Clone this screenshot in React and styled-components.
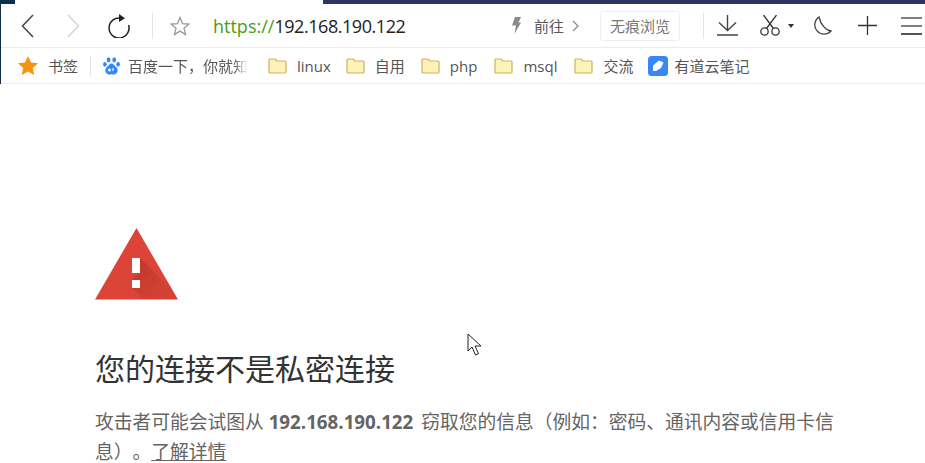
import styled, { createGlobalStyle } from "styled-components"

const GlobalStyle = createGlobalStyle`
  html, body { margin: 0; padding: 0; background: #fff; overflow: hidden; }
  body { font-family: "Noto Sans CJK SC", sans-serif; }
`

const Page = styled.div`
  position: relative;
  width: 925px;
  height: 463px;
  overflow: hidden;
`

const TopStrip = styled.div`
  display: flex;
  height: 4px;
`
const StripPart = styled.div`
  width: ${p => p.$w ? p.$w + "px" : "auto"};
  flex: ${p => p.$w ? "none" : 1};
  background: ${p => p.$color};
`

const Chrome = styled.div`
  border-left: 1px solid #12304a;
`

const Toolbar = styled.div`
  display: flex;
  align-items: center;
  height: 43px;
  padding-right: 3px;
  border-bottom: 1px solid #ececec;
`

const IconSlot = styled.span`
  display: flex;
  flex: none;
  margin-left: ${p => p.$ml}px;
`

const Divider = styled.span`
  flex: none;
  width: 1px;
  height: ${p => p.$h}px;
  background: #e4e4e4;
  margin-left: ${p => p.$ml}px;
`

const Url = styled.div`
  flex: 1;
  margin-left: 23px;
  font-family: "Open Sans", sans-serif;
  font-size: 18px;
  letter-spacing: -0.45px;
  color: #222;
  white-space: nowrap;
`
const Scheme = styled.span`
  color: #4a9d12;
  letter-spacing: 0;
`

const GoLabel = styled.span`
  margin-left: 13px;
  font-size: 15px;
  color: #5a5a5a;
  white-space: nowrap;
`

const PrivateButton = styled.div`
  flex: none;
  box-sizing: border-box;
  width: 80px;
  height: 30px;
  margin-left: 21px;
  border: 1px solid #eee;
  border-radius: 3px;
  display: flex;
  align-items: center;
  justify-content: center;
  font-size: 15px;
  color: #777;
`

const BookmarkBar = styled.div`
  display: flex;
  align-items: center;
  height: 35px;
  border-bottom: 1px solid #ececec;
  font-size: 15px;
  color: #555;
`

const Bookmark = styled.span`
  flex: none;
  display: flex;
  align-items: center;
  gap: ${p => p.$gap || 10}px;
  margin-left: ${p => p.$ml}px;
  white-space: nowrap;
  font-family: "Open Sans", "Noto Sans CJK SC", sans-serif;
`

const FadeLabel = styled.span`
  width: 120px;
  overflow: hidden;
  -webkit-mask-image: linear-gradient(to right, #000 88%, transparent);
  mask-image: linear-gradient(to right, #000 88%, transparent);
`

const Content = styled.main`
  padding: 144px 0 0 95px;
  width: 750px;
`

const Heading = styled.h1`
  margin: 41px 0 0;
  font-size: 30px;
  font-weight: 400;
  line-height: 52px;
  color: #333;
`

const Message = styled.p`
  margin: 14px 0 0;
  font-family: "Open Sans", "Noto Sans CJK SC", sans-serif;
  font-size: 18.75px;
  line-height: 30px;
  color: #646464;
  text-spacing-trim: space-all;
  strong { font-weight: 700; margin-right: 3px; }
  a { color: #646464; text-decoration: underline; }
`

const Cursor = styled.svg`
  position: absolute;
  left: 467px;
  top: 333px;
`

const Back = ({ color = "#444", flip }) => (
  <svg width="13" height="24" viewBox="0 0 13 24" fill="none" stroke={color} strokeWidth="1.5"
    style={flip ? { transform: "scaleX(-1)" } : undefined}>
    <path d="M12 1 1.5 12 12 23" />
  </svg>
)

const Reload = () => (
  <svg width="22" height="24" viewBox="0 0 22 24" fill="none">
    <path d="M13 4.2A10 10 0 1 0 20.6 11" stroke="#222" strokeWidth="1.5" />
    <path d="M11 0 17 4.2 11 8z" fill="#222" />
  </svg>
)

const StarOutline = () => (
  <svg width="20" height="20" viewBox="0 0 20 20" fill="none" stroke="#999" strokeWidth="1.3">
    <path d="M10 1.5 12.5 7.7 19 8.1 14 12.3 15.6 18.6 10 15.1 4.4 18.6 6 12.3 1 8.1 7.5 7.7z" />
  </svg>
)

const Bolt = () => (
  <svg width="9" height="17" viewBox="0 0 9 17" fill="#8a8a8a">
    <path d="M3 0h6L6.5 5.5H9L2.5 17 4 8.5H0z" />
  </svg>
)

const SmallChevron = () => (
  <svg width="7" height="12" viewBox="0 0 7 12" fill="none" stroke="#888" strokeWidth="1.2">
    <path d="M1 1 6 6 1 11" />
  </svg>
)

const Download = () => (
  <svg width="21" height="21" viewBox="0 0 21 21" fill="none" stroke="#444" strokeWidth="1.4">
    <path d="M10.5 0v15M2 7.5l8.5 8 8.5-8M0 20h21" />
  </svg>
)

const Scissors = () => (
  <svg width="20" height="21" viewBox="0 0 20 21" fill="none" stroke="#333" strokeWidth="1.3">
    <circle cx="4.5" cy="16.5" r="3.7" />
    <circle cx="15.5" cy="16.5" r="3.7" />
    <path d="M6.5 13.5 16.5 0M13.5 13.5 3.5 0" />
  </svg>
)

const Caret = () => (
  <svg width="6" height="4" viewBox="0 0 6 4" fill="#333"><path d="M0 0h6L3 4z" /></svg>
)

const Moon = () => (
  <svg width="20" height="20" viewBox="0 0 20 20" fill="none" stroke="#444" strokeWidth="1.3">
    <path d="M7 1A9.300 9.300 0 1 0 19 15C14 14.500 8.500 8.500 7 1z" />
  </svg>
)

const Plus = () => (
  <svg width="19" height="19" viewBox="0 0 19 19" stroke="#333" strokeWidth="1.3">
    <path d="M9.5 0v19M0 9.5h19" />
  </svg>
)

const Menu = () => (
  <svg width="21" height="18" viewBox="0 0 21 18" stroke="#555" strokeWidth="1.4">
    <path d="M0 1h21M0 9h21" />
    <path d="M0 17h21" strokeWidth="2" />
  </svg>
)

const StarFilled = () => (
  <svg width="20" height="19" viewBox="0 0 20 19" fill="#f7940f">
    <path d="M10 0 13 6.4 20 7.2 14.8 12 16.2 19 10 15.5 3.8 19 5.2 12 0 7.2 7 6.4z" />
  </svg>
)

const Paw = () => (
  <svg width="17" height="18" viewBox="0 0 17 18" fill="#3385ff">
    <ellipse cx="5.6" cy="2.8" rx="1.9" ry="2.6" />
    <ellipse cx="11.2" cy="2.8" rx="1.9" ry="2.6" />
    <ellipse cx="1.9" cy="7.3" rx="1.8" ry="2.4" />
    <ellipse cx="15.1" cy="7.3" rx="1.8" ry="2.4" />
    <path d="M8.5 6.5c2 0 2.6 2 4.6 3.6 2.6 2 2 6.900-2 7.400-1 .1-1.800-.3-2.600-.3s-1.600.4-2.600.3c-4-.5-4.600-5.400-2-7.400C5.900 8.500 6.500 6.500 8.500 6.500z" />
    <circle cx="6.500" cy="13" r="1.500" fill="#fff" />
    <path d="M10 11v3" stroke="#fff" strokeWidth="1.200" />
  </svg>
)

const Folder = () => (
  <svg width="19" height="16" viewBox="0 0 19 16" fill="#fdf3b8" stroke="#d6ad5f" strokeWidth="1.200">
    <path d="M1 14V2a1 1 0 0 1 1-1h5l2 2h8a1 1 0 0 1 1 1v10a1 1 0 0 1-1 1H2a1 1 0 0 1-1-1z" />
  </svg>
)

const NoteLogo = () => (
  <svg width="20" height="20" viewBox="0 0 20 20">
    <rect width="20" height="20" rx="3.500" fill="#3b86f5" />
    <path d="M5 9.500 11 4.500 15.500 6.500 13 12 8 15H5z" fill="#fff" />
  </svg>
)

const Warning = () => (
  <svg width="83" height="72" viewBox="0 0 83 72" style={{ display: "block" }}>
    <defs>
      <linearGradient id="warnShadow" x1="0" y1="0" x2="1" y2="1">
        <stop offset="0" stopColor="#7a1a12" stopOpacity=".3" />
        <stop offset="1" stopColor="#7a1a12" stopOpacity="0" />
      </linearGradient>
    </defs>
    <path d="M41.500 0 83 71.500H0z" fill="#db4437" />
    <path d="M45 30 73 58 83 71.500H49L37 60H45V52H37L45 45z" fill="url(#warnShadow)" />
    <rect x="37" y="30" width="8" height="15" fill="#fff" />
    <rect x="37" y="52" width="8" height="8" fill="#fff" />
  </svg>
)

const folders = [
  { label: "linux", ml: 20 },
  { label: "自用", ml: 15 },
  { label: "php", ml: 16 },
  { label: "msql", ml: 17 },
  { label: "交流", ml: 17 },
]

export default function App() {
  return (
    <Page>
      <GlobalStyle />
      <TopStrip>
        <StripPart $w={15} $color="#0f2f4a" />
        <StripPart $w={308} $color="#fff" />
        <StripPart $color="#2f3561" />
      </TopStrip>
      <Chrome>
        <Toolbar>
          <IconSlot $ml={20}><Back /></IconSlot>
          <IconSlot $ml={33}><Back color="#d4d4d4" flip /></IconSlot>
          <IconSlot $ml={28}><Reload /></IconSlot>
          <Divider $ml={22} $h={26} />
          <IconSlot $ml={17}><StarOutline /></IconSlot>
          <Url><Scheme>https://</Scheme>192.168.190.122</Url>
          <Bolt />
          <GoLabel>前往</GoLabel>
          <IconSlot $ml={8}><SmallChevron /></IconSlot>
          <PrivateButton>无痕浏览</PrivateButton>
          <Divider $ml={23} $h={26} />
          <IconSlot $ml={13}><Download /></IconSlot>
          <IconSlot $ml={22}><Scissors /></IconSlot>
          <IconSlot $ml={8}><Caret /></IconSlot>
          <IconSlot $ml={18}><Moon /></IconSlot>
          <IconSlot $ml={26}><Plus /></IconSlot>
          <IconSlot $ml={24}><Menu /></IconSlot>
        </Toolbar>
        <BookmarkBar>
          <Bookmark $ml={17} $gap={10}><StarFilled />书签</Bookmark>
          <Divider $ml={12} $h={20} />
          <Bookmark $ml={12} $gap={8}><Paw /><FadeLabel>百度一下，你就知</FadeLabel></Bookmark>
          {folders.map(f => (
            <Bookmark key={f.label} $ml={f.ml}><Folder />{f.label}</Bookmark>
          ))}
          <Bookmark $ml={15} $gap={6}><NoteLogo />有道云笔记</Bookmark>
        </BookmarkBar>
      </Chrome>
      <Content>
        <Warning />
        <Heading>您的连接不是私密连接</Heading>
        <Message>
          攻击者可能会试图从 <strong>192.168.190.122</strong> 窃取您的信息（例如：密码、通讯内容或信用卡信息）。<a href="#more">了解详情</a>
        </Message>
      </Content>
      <Cursor width="16" height="25" viewBox="0 0 16 25">
        <path d="M1 1v17l4-4 3.500 8 3-1.300L8 13h6z" fill="#fff" stroke="#222" strokeWidth="1" />
      </Cursor>
    </Page>
  )
}
